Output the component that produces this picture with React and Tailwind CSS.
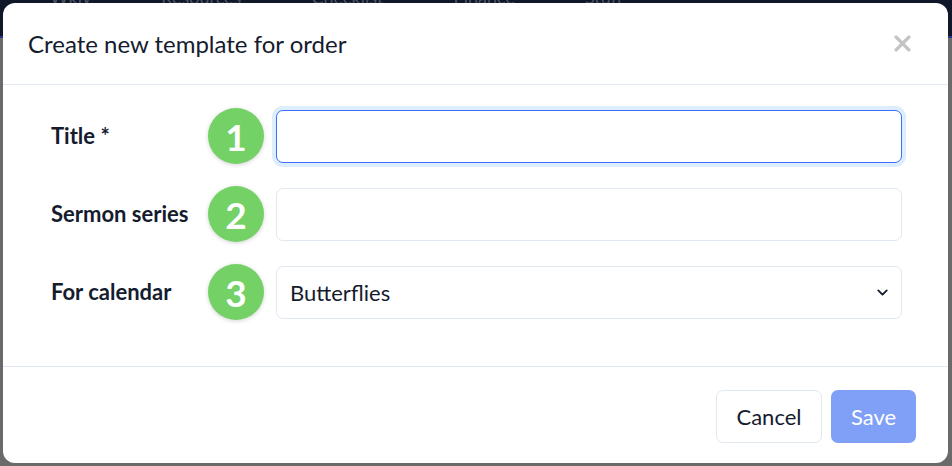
import { ChevronDown } from 'lucide-react';

const FONT = { fontFamily: 'Lato, "Noto Sans", sans-serif' };

function StepBadge({ n }) {
  return (
    <div className="flex h-[56px] w-[56px] shrink-0 items-center justify-center rounded-full bg-[#73d166] text-[37px] font-bold leading-none text-white shadow-[0_1px_4px_rgba(0,0,0,0.18)]">
      {n}
    </div>
  );
}

function FieldRow({ label, n, children }) {
  return (
    <div className="flex items-center">
      <label className="w-[157px] shrink-0 text-[22px] font-bold leading-tight text-[#151c2e]">{label}</label>
      <StepBadge n={n} />
      <div className="ml-[12px] flex-1">{children}</div>
    </div>
  );
}

export default function App() {
  return (
    <div className="relative h-[466px] w-[952px] overflow-hidden bg-[#6a6a6a]" style={FONT}>
      {/* page behind the overlay */}
      <div className="flex h-[38px] items-start gap-[70px] border-b-2 border-[#24348a] bg-[#0f1729] pl-[50px] text-[18px] leading-none text-[#4b5468]">
        <span className="-mt-[12px]">Wkly</span>
        <span className="-mt-[12px]">Resources</span>
        <span className="-mt-[12px]">Checklist</span>
        <span className="-mt-[12px]">Finance</span>
        <span className="-mt-[12px]">Stuff</span>
      </div>

      {/* modal */}
      <div className="absolute left-[3px] right-[4px] top-[3px] bottom-[3px] flex flex-col rounded-[12px] bg-white">
        <div className="flex h-[82px] shrink-0 items-center justify-between border-b border-[#e2e8f0] pl-[25px] pr-[37px]">
          <h5 className="text-[24px] font-normal leading-tight text-[#151c2e]">Create new template for order</h5>
          <button className="text-[#c4c4c4]">
            <svg width="17" height="17" viewBox="0 0 16 16" fill="none" stroke="currentColor" strokeWidth="3.2" strokeLinecap="round">
              <path d="M2 2 L14 14 M14 2 L2 14" />
            </svg>
          </button>
        </div>

        <div className="flex flex-1 flex-col gap-[22px] pl-[48px] pr-[46px] pt-[23px]">
          <FieldRow label="Title *" n="1">
            <input
              className="block h-[53px] w-full rounded-[7px] border border-[#3d6ef5] bg-white px-[14px] text-[22px] text-[#151c2e] shadow-[0_0_0_4px_#dcedfc] outline-none"
              style={FONT}
            />
          </FieldRow>
          <FieldRow label="Sermon series" n="2">
            <input
              className="block h-[53px] w-full rounded-[7px] border border-[#e2e8f0] bg-white px-[14px] text-[22px] text-[#151c2e] outline-none"
              style={FONT}
            />
          </FieldRow>
          <FieldRow label="For calendar" n="3">
            <div className="flex h-[53px] w-full items-center justify-between rounded-[7px] border border-[#e2e8f0] bg-white pl-[13px] pr-[10px] text-[22px] text-[#151c2e]">
              <span>Butterflies</span>
              <ChevronDown size={17} strokeWidth={2.6} className="text-[#151c2e]" />
            </div>
          </FieldRow>
        </div>

        <div className="flex h-[97px] shrink-0 items-start justify-end gap-[9px] border-t border-[#e2e8f0] pr-[32px] pt-[23px]">
          <button className="h-[53px] w-[106px] rounded-[7px] border border-[#e2e8f0] bg-white text-[22px] text-[#151c2e]">
            Cancel
          </button>
          <button className="h-[53px] w-[85px] rounded-[7px] bg-[#809ff7] text-[22px] text-white">
            Save
          </button>
        </div>
      </div>
    </div>
  );
}
